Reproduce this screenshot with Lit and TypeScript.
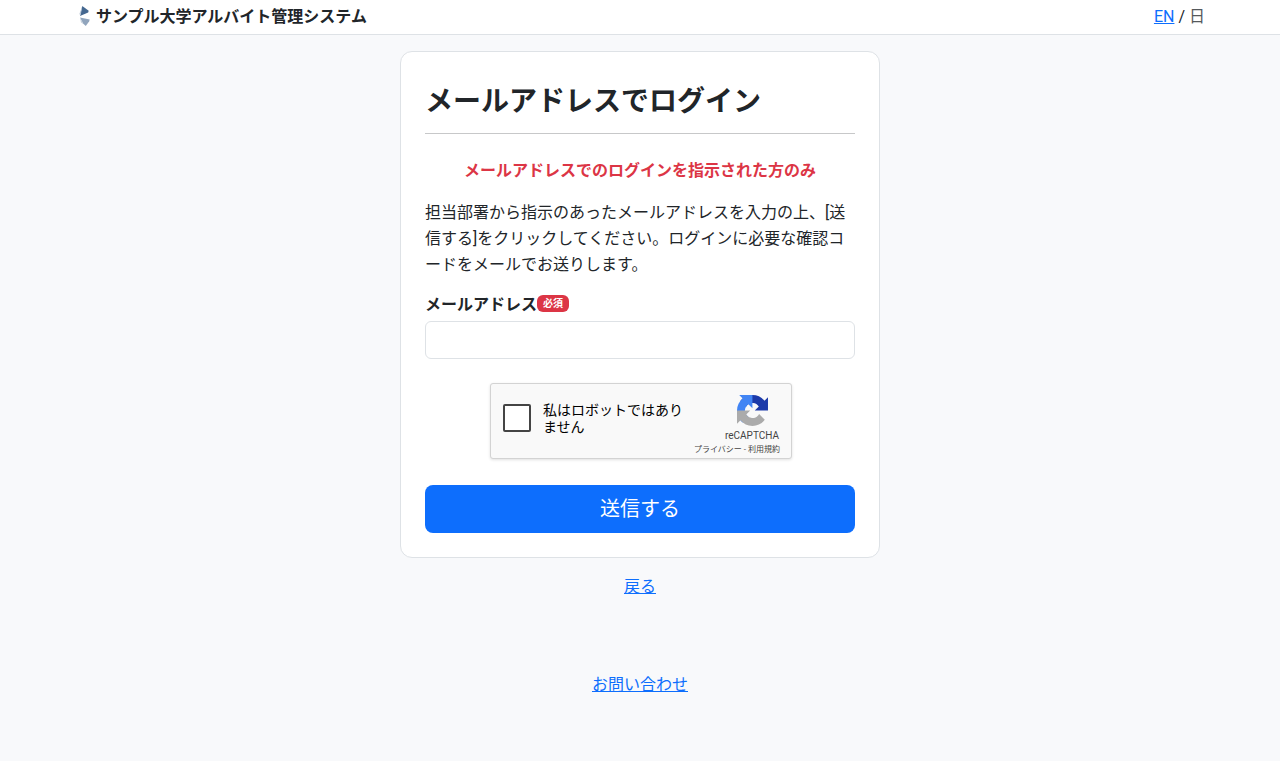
import { LitElement, html, css } from "lit";
import { customElement, state } from "lit/decorators.js";

@customElement("recaptcha-box")
class RecaptchaBox extends LitElement {
  static styles = css`
    :host {
      display: block;
      font-family: Roboto, "Noto Sans CJK JP", sans-serif;
    }
    .box {
      box-sizing: border-box;
      display: flex;
      justify-content: space-between;
      width: 302px;
      min-height: 76px;
      margin-left: 2px;
      padding: 0 11px 0 12px;
      border: 1px solid #d3d3d3;
      border-radius: 3px;
      background: #f9f9f9;
      box-shadow: 0 1px 3px rgba(0, 0, 0, 0.12);
      color: #000;
    }
    .check {
      display: flex;
      align-items: center;
      gap: 12px;
      padding-bottom: 6px;
    }
    input {
      appearance: none;
      box-sizing: border-box;
      flex: none;
      width: 28px;
      height: 28px;
      margin: 0;
      border: 2px solid #444;
      border-radius: 2px;
      background: #fff;
    }
    input:checked {
      background: #4285f4;
    }
    label {
      width: 144px;
      padding-top: 2px;
      font-size: 14px;
      line-height: 17px;
    }
    .brand {
      display: flex;
      flex-direction: column;
      align-items: flex-end;
      margin-left: -24px;
      padding-top: 11px;
      color: #444;
    }
    svg {
      width: 31px;
      height: 31px;
      margin-right: 12px;
    }
    .name {
      font-size: 10px;
      line-height: 20px;
      padding-right: 1px;
    }
    .terms {
      font-size: 8px;
      line-height: 8px;
      white-space: nowrap;
    }
    a {
      color: inherit;
      text-decoration: none;
    }
  `;

  render() {
    return html`
      <div class="box">
        <div class="check">
          <input type="checkbox" id="robot" />
          <label for="robot">私はロボットではありません</label>
        </div>
        <div class="brand">
          <svg viewBox="0 0 64 64" aria-hidden="true">
            <path fill="#1c3aa9" d="M64 31.955l-.033-1.37V4.687l-7.16 7.16C50.948 4.674 42.033.093 32.05.093c-10.4 0-19.622 4.96-25.458 12.64l11.736 11.86a15.55 15.55 0 0 1 4.754-5.334c2.05-1.6 4.952-2.906 8.968-2.906.485 0 .86.057 1.135.163 4.976.393 9.288 3.14 11.828 7.124l-8.307 8.307L64 31.953" />
            <path fill="#4285f4" d="M31.862.094l-1.37.033H4.594l7.16 7.16C4.58 13.147 0 22.06 0 32.046c0 10.4 4.96 19.622 12.64 25.458L24.5 45.768a15.55 15.55 0 0 1-5.334-4.754c-1.6-2.05-2.906-4.952-2.906-8.968 0-.485.057-.86.163-1.135.393-4.976 3.14-9.288 7.124-11.828l8.307 8.307L31.86.095" />
            <path fill="#ababab" d="M.001 32.045l.033 1.37v25.898l7.16-7.16c5.86 7.173 14.774 11.754 24.76 11.754 10.4 0 19.622-4.96 25.458-12.64l-11.736-11.86a15.55 15.55 0 0 1-4.754 5.334c-2.05 1.6-4.952 2.906-8.968 2.906-.485 0-.86-.057-1.135-.163-4.976-.393-9.288-3.14-11.828-7.124l8.307-8.307c-10.522.04-22.4.066-27.295-.005" />
          </svg>
          <div class="name">reCAPTCHA</div>
          <div class="terms"><a href="#privacy">プライバシー</a> - <a href="#terms">利用規約</a></div>
        </div>
      </div>
    `;
  }
}

@customElement("app-root")
class AppRoot extends LitElement {
  static styles = css`
    :host {
      display: block;
      min-height: 100vh;
      background: #f8f9fb;
      color: #212529;
      font-family: Roboto, "Noto Sans CJK JP", sans-serif;
      font-size: 16px;
      line-height: 26px;
    }
    a {
      color: #0d6efd;
      text-decoration: underline;
    }
    header {
      background: #fff;
      border-bottom: 1px solid #dee2e6;
    }
    .bar {
      box-sizing: border-box;
      display: flex;
      align-items: center;
      justify-content: space-between;
      max-width: 1140px;
      min-height: 34px;
      margin: 0 auto;
      padding: 4px 5px 4px 6px;
    }
    .site {
      display: flex;
      align-items: center;
      gap: 4px;
      color: inherit;
      font-weight: 700;
      text-decoration: none;
    }
    .site svg {
      width: 16px;
      height: 22px;
    }
    .current {
      color: #55595c;
    }
    main {
      display: flex;
      flex-direction: column;
      align-items: center;
      padding: 16px;
    }
    .card {
      box-sizing: border-box;
      width: 100%;
      max-width: 480px;
      padding: 32px 24px 24px;
      border: 1px solid #dee2e6;
      border-radius: 12px;
      background: #fff;
    }
    h1 {
      margin: 0 0 24px;
      padding-bottom: 14px;
      border-bottom: 1px solid #c7c8c9;
      font-size: 28px;
      font-weight: 700;
      line-height: 35px;
    }
    p {
      margin: 0 0 16px;
      line-break: loose;
    }
    .notice {
      color: #dc3545;
      font-weight: 700;
      text-align: center;
    }
    .lead {
      margin-bottom: 14px;
    }
    .field {
      display: flex;
      align-items: flex-start;
      margin-bottom: 3px;
      font-weight: 700;
    }
    .badge {
      padding: 2px 6px;
      margin-top: 3px;
      border-radius: 6px;
      background: #dc3545;
      color: #fff;
      font-size: 10px;
      line-height: 13px;
    }
    .mail {
      box-sizing: border-box;
      display: block;
      width: 100%;
      height: 38px;
      padding: 6px 12px;
      border: 1px solid #dee2e6;
      border-radius: 6px;
      background: #fff;
      font: inherit;
    }
    .captcha {
      display: flex;
      justify-content: center;
      margin: 24px 0 26px;
    }
    button {
      display: block;
      width: 100%;
      height: 48px;
      padding: 0 16px;
      border: 0;
      border-radius: 8px;
      background: #0d6efd;
      color: #fff;
      font: inherit;
      font-size: 20px;
      line-height: 30px;
    }
    .back {
      margin-top: 16px;
    }
    footer {
      padding: 56px 16px 64px;
      text-align: center;
    }
  `;

  @state() private email = "";

  private onInput(e: Event) {
    this.email = (e.target as HTMLInputElement).value;
  }

  render() {
    return html`
      <header>
        <div class="bar">
          <a class="site" href="#top">
            <svg viewBox="0 0 16 22" aria-hidden="true">
              <path fill="#456890" d="M6.3 0 12.7 4.8 12.2 6.4 4 9.9Z" />
              <path fill="#b9c6d6" d="M6.3 0 4.6 9.6 3.4 8Z" />
              <path fill="#91a5bd" d="M4 11.4 13.7 13.6 13.2 15.2 9.8 20 7 17.6Z" />
              <path fill="#c6d0dc" d="M4 11.4 7.6 18 5 16.6Z" />
            </svg>
            <span>サンプル大学アルバイト管理システム</span>
          </a>
          <nav><a href="#en">EN</a> / <span class="current">日</span></nav>
        </div>
      </header>
      <main>
        <form class="card" @submit=${(e: Event) => e.preventDefault()}>
          <h1>メールアドレスでログイン</h1>
          <p class="notice">メールアドレスでのログインを指示された方のみ</p>
          <p class="lead">担当部署から指示のあったメールアドレスを入力の上、[送信する]をクリックしてください。ログインに必要な確認コードをメールでお送りします。</p>
          <label class="field" for="email">メールアドレス<span class="badge">必須</span></label>
          <input class="mail" id="email" type="email" .value=${this.email} @input=${this.onInput} />
          <div class="captcha"><recaptcha-box></recaptcha-box></div>
          <button type="submit">送信する</button>
        </form>
        <a class="back" href="#back">戻る</a>
      </main>
      <footer><a href="#contact">お問い合わせ</a></footer>
    `;
  }
}
